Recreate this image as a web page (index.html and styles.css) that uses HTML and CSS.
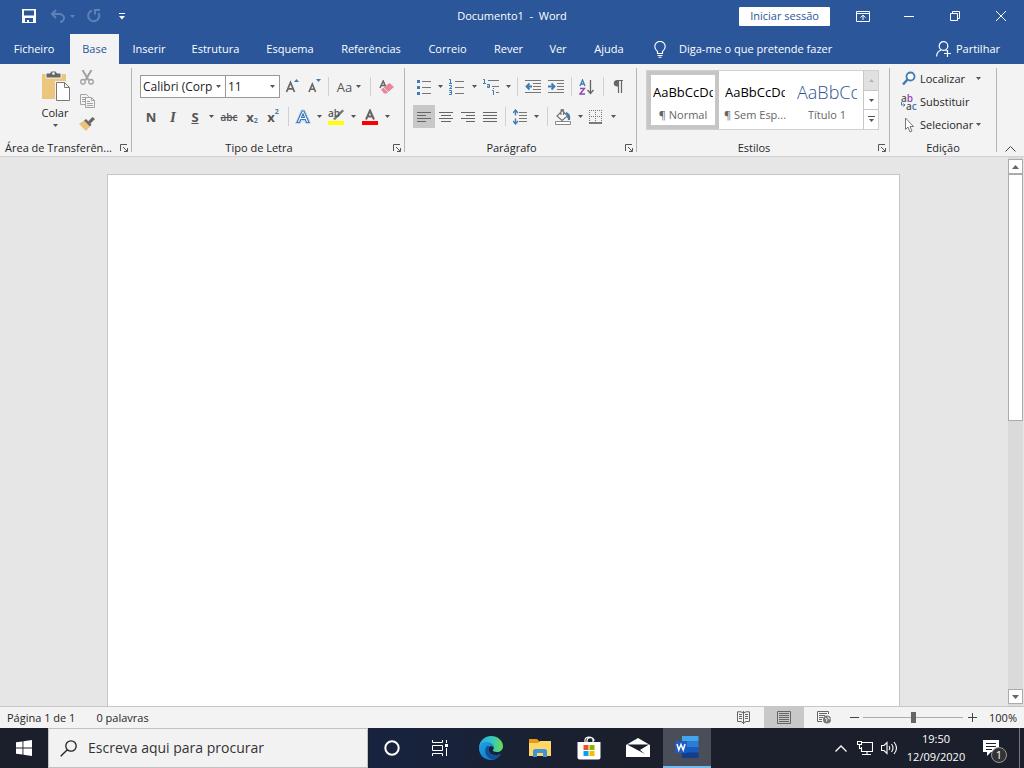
FILE: index.html
```html
<!DOCTYPE html>
<html lang="pt-PT">
<head>
<meta charset="utf-8">
<title>Documento1 - Word</title>
<link rel="stylesheet" href="styles.css">
</head>
<body>
<svg class="defs" aria-hidden="true">
  <symbol id="caret" viewBox="0 0 5 3"><path d="M0 0h5L2.500 3z" fill="#555"/></symbol>
  <symbol id="launch" viewBox="0 0 8 8"><path d="M.5 7V.5H7M3 3l4 4M7.500 4v3.500H4" fill="none" stroke="#555"/></symbol>
</svg>

<header class="titlebar">
  <div class="quick">
    <button class="q-save" aria-label="Guardar"><svg width="14" height="14" viewBox="0 0 14 14"><path fill="#fff" fill-rule="evenodd" d="M0 0h14v14H0zM2 1.500v5h10v-5zM3 9v4h2v-2h2v2h4V9z"/></svg></button>
    <button class="q-undo" aria-label="Anular"><svg width="16" height="14" viewBox="0 0 16 14"><path d="M6 1L2 5l4 4M2 5h7c3 0 5 2 5 4s-2 4-4 4" fill="none" stroke="#6181b6" stroke-width="2"/></svg><svg class="caret-dim" width="5" height="3" viewBox="0 0 5 3"><path d="M0 0h5L2.500 3z" fill="#6181b6"/></svg></button>
    <button class="q-redo" aria-label="Repetir"><svg width="14" height="14" viewBox="0 0 14 14"><path d="M5 1.500A5.500 5.500 0 1 0 11.500 4M8 5.500V1h5" fill="none" stroke="#6181b6" stroke-width="2"/></svg></button>
    <button class="q-more" aria-label="Personalizar"><svg width="6" height="7" viewBox="0 0 6 7"><path d="M0 0h6v1H0zM0 3h6L3 6.500z" fill="#fff"/></svg></button>
  </div>
  <h1 class="title">Documento1&nbsp; -&nbsp; Word</h1>
  <div class="window">
    <button class="signin">Iniciar sessão</button>
    <button class="win" aria-label="Opções do friso"><svg width="14" height="11" viewBox="0 0 14 11"><path d="M.5 .5h13v10H.5zM.5 2.500h13M7 9V4.500M4.500 6.500L7 4.200l2.500 2.300" fill="none" stroke="#fff"/></svg></button>
    <button class="win" aria-label="Minimizar"><svg width="10" height="10" viewBox="0 0 10 10"><path d="M0 5.500h10" stroke="#fff"/></svg></button>
    <button class="win" aria-label="Restaurar"><svg width="10" height="10" viewBox="0 0 10 10"><path d="M.5 2.500h7v7h-7zM2.500 2V.5h7v7H8" fill="none" stroke="#fff"/></svg></button>
    <button class="win" aria-label="Fechar"><svg width="10" height="10" viewBox="0 0 10 10"><path d="M0 0l10 10M10 0L0 10" stroke="#fff"/></svg></button>
  </div>
</header>

<nav class="tabs">
  <button class="file">Ficheiro</button>
  <button class="active">Base</button>
  <button>Inserir</button>
  <button>Estrutura</button>
  <button>Esquema</button>
  <button>Referências</button>
  <button>Correio</button>
  <button>Rever</button>
  <button>Ver</button>
  <button>Ajuda</button>
  <button class="tell"><svg width="12" height="17" viewBox="0 0 12 17"><path d="M3.500 12.500v-2C2 9 .8 8 .8 5.600a5.200 5.200 0 0 1 10.400 0C11.200 8 10 9 8.500 10.500v2zM3.500 14.500h5M4.500 16.300h3" fill="none" stroke="#fff" stroke-width="1.100"/></svg>Diga-me o que pretende fazer</button>
  <button class="share"><svg width="16" height="16" viewBox="0 0 16 16"><circle cx="7.500" cy="5" r="4.300" fill="none" stroke="#fff" stroke-width="1.200"/><path d="M.6 15.500c0-3 2-5.500 4.500-6.500M9.500 9.200l1 .8M11.500 9v7M8 12.500h7" fill="none" stroke="#fff" stroke-width="1.200"/></svg>Partilhar</button>
</nav>

<main class="ribbon">
  <section class="group clip">
    <div class="body">
      <button class="paste">
        <svg width="30" height="32" viewBox="0 0 30 32"><path d="M1 4h24v25H1z" fill="#ecc67c"/><path d="M5 3h4l1-2h5l1 2h4v5H5z" fill="#666" stroke="#f3f3f3"/><circle cx="12.500" cy="3.500" r="1.300" fill="#fff"/><path d="M15.500 12.500h8l5 5v13h-13z" fill="#fff" stroke="#f3f3f3" stroke-width="3"/><path d="M15.500 12.500h8l5 5v13h-13zM23.500 12.500v5h5" fill="#fff" stroke="#777"/></svg>
        <span>Colar</span>
        <svg width="5" height="3"><use href="#caret"/></svg>
      </button>
      <div class="clip-tools">
        <button aria-label="Cortar"><svg width="14" height="15" viewBox="0 0 14 15"><path d="M2.500 0l6 10M11.500 0l-6 10" stroke="#a0a0a0" stroke-width="2"/><circle cx="3" cy="11.800" r="2.300" fill="none" stroke="#a0a0a0" stroke-width="1.300"/><circle cx="11" cy="11.800" r="2.300" fill="none" stroke="#a0a0a0" stroke-width="1.300"/></svg></button>
        <button aria-label="Copiar"><svg width="15" height="14" viewBox="0 0 15 14"><path d="M.5 .5h6l2 2v8h-8zM2 3.500h4M2 5.500h4M2 7.500h4" fill="#f3f3f3" stroke="#a3a3a3"/><path d="M5.500 3.500h6l3 3v7h-9zM11.500 3.500v3h3M7 7.500h3M7 9.500h6M7 11.500h6" fill="#f3f3f3" stroke="#a3a3a3"/></svg></button>
        <button aria-label="Pincel de formatação"><svg width="16" height="14" viewBox="0 0 16 14"><path d="M0 7l5-3.500 6 6L7 14z" fill="#ecc27a"/><path d="M5 3.500l2-1.500 5.500 5.500L11 9.500z" fill="#666"/><path d="M9 4.500L13.500 0l2.500 2-4.500 4.500z" fill="#666"/></svg></button>
      </div>
    </div>
    <div class="foot"><h2>Área de Transferên...</h2><button aria-label="Abrir"><svg width="8" height="8"><use href="#launch"/></svg></button></div>
  </section>
  <i class="divider"></i>

  <section class="group font">
    <div class="body rows">
      <div class="row">
        <label class="combo family"><select aria-label="Tipo de letra"><option>Calibri (Corp</option></select><svg width="5" height="3"><use href="#caret"/></svg></label>
        <label class="combo size"><select aria-label="Tamanho"><option>11</option></select><svg width="5" height="3"><use href="#caret"/></svg></label>
        <button class="b24" aria-label="Aumentar"><svg width="14" height="15" viewBox="0 0 14 15"><path d="M1.500 13L5.500 3.500 9.500 13M2.800 9.800h5.400" fill="none" stroke="#666" stroke-width="1.700"/><path d="M9 3l2.500-3L14 3z" fill="#3f7cb5"/></svg></button>
        <button class="b20" aria-label="Diminuir"><svg width="13" height="15" viewBox="0 0 13 15"><path d="M1 13l3.300-8 3.300 8M2 10.300h4.500" fill="none" stroke="#666" stroke-width="1.600"/><path d="M8 0h5l-2.500 3z" fill="#3f7cb5"/></svg></button>
        <i class="sep"></i>
        <button class="b34 case">Aa<svg width="5" height="3"><use href="#caret"/></svg></button>
        <i class="sep"></i>
        <button class="b24" aria-label="Limpar"><svg width="15" height="14" viewBox="0 0 15 14"><path d="M1 8l3.200-7 2.600 6M2 5.500h4" fill="none" stroke="#666" stroke-width="1.500"/><path d="M2 9.500l8.500-6.500L15 7l-7.500 6.500H5z" fill="#e8869a"/><path d="M4.500 7.500l4.500 4.500" stroke="#f3f3f3" stroke-width=".8"/></svg></button>
      </div>
      <div class="row">
        <button class="b22 glyph">N</button>
        <button class="b22 glyph ital">I</button>
        <button class="b22 glyph under">S</button>
        <button class="b10" aria-label="Mais"><svg width="5" height="3"><use href="#caret"/></svg></button>
        <button class="b26 strike">abc</button>
        <button class="b20 glyph">x<sub>2</sub></button>
        <button class="b22 glyph">x<sup>2</sup></button>
        <i class="sep"></i>
        <button class="b22" aria-label="Efeitos"><svg width="16" height="16" viewBox="0 0 16 16"><path d="M2 13.500L7 2h2l5 11.500h-2.500L10.300 11H5.700l-1.200 2.500z" fill="none" stroke="#c5daee" stroke-width="3"/><path d="M2 13.500L7 2h2l5 11.500h-2.500L10.300 10.500H5.700l-1.200 3zM6.500 8.500h3L8 4.800z" fill="#fff" stroke="#3f7cb5" stroke-width="1.200"/></svg></button>
        <button class="b10" aria-label="Mais"><svg width="5" height="3"><use href="#caret"/></svg></button>
        <button class="b24 marker" aria-label="Realce"><span>ab</span><svg width="16" height="16" viewBox="0 0 16 16"><path d="M5 10l2 1 9-9-1.500-1.500-3.500 3z" fill="#777"/><path d="M0 12h16v4H0z" fill="#ff0"/></svg></button>
        <button class="b10" aria-label="Mais"><svg width="5" height="3"><use href="#caret"/></svg></button>
        <button class="b24" aria-label="Cor"><svg width="16" height="16" viewBox="0 0 16 16"><path d="M4 10.500L8 1.500l4 9M5.500 7.500h5" fill="none" stroke="#666" stroke-width="2"/><path d="M0 12h16v4H0z" fill="#f00"/></svg></button>
        <button class="b10" aria-label="Mais"><svg width="5" height="3"><use href="#caret"/></svg></button>
      </div>
    </div>
    <div class="foot"><h2>Tipo de Letra</h2><button aria-label="Abrir"><svg width="8" height="8"><use href="#launch"/></svg></button></div>
  </section>
  <i class="divider"></i>

  <section class="group para">
    <div class="body rows">
      <div class="row">
        <button class="b22" aria-label="Marcas"><svg width="14" height="16" viewBox="0 0 14 16"><path d="M5 2.500h9M5 8.500h9M5 14.500h9" stroke="#777"/><path d="M0 1h3v3H0zM0 7h3v3H0zM0 13h3v3H0z" fill="#3f7cb5"/></svg></button>
        <button class="b10" aria-label="Mais"><svg width="5" height="3"><use href="#caret"/></svg></button>
        <button class="b24" aria-label="Numeração"><svg width="16" height="16" viewBox="0 0 16 16"><path d="M6 2.500h9M6 8.500h9M6 14.500h9" stroke="#777"/><path d="M0 .5h1.500V4M0 4.500h3M0 6.500h2.500v1.500L.5 9.500H3M0 11.500h2.500v4H0M.5 13.500h2" fill="none" stroke="#3f7cb5"/></svg></button>
        <button class="b10" aria-label="Mais"><svg width="5" height="3"><use href="#caret"/></svg></button>
        <button class="b24" aria-label="Vários níveis"><svg width="16" height="16" viewBox="0 0 16 16"><path d="M5 1.500h11M9 7.500h7M13 13.500h3" stroke="#777"/><path d="M0 .5h1.500V4M0 4.500h3M4 5.500h2.500v3H4.500v-1.500h2M10.500 9v1M9 11.500h1.500V16" fill="none" stroke="#3f7cb5"/></svg></button>
        <button class="b10" aria-label="Mais"><svg width="5" height="3"><use href="#caret"/></svg></button>
        <i class="sep"></i>
        <button class="b24" aria-label="Diminuir avanço"><svg width="16" height="13" viewBox="0 0 16 13"><path d="M0 .5h16M8 3.500h8M8 6.500h8M8 9.500h8M0 12.500h16" stroke="#777"/><path d="M7 6.500H1.500M4.500 3.500l-3 3 3 3" stroke="#3f7cb5" stroke-width="1.800" fill="none"/></svg></button>
        <button class="b22" aria-label="Aumentar avanço"><svg width="16" height="13" viewBox="0 0 16 13"><path d="M0 .5h16M9 3.500h7M9 6.500h7M9 9.500h7M0 12.500h16" stroke="#777"/><path d="M0 6.500h6M3.500 3.500l3 3-3 3" stroke="#3f7cb5" stroke-width="1.800" fill="none"/></svg></button>
        <i class="sep"></i>
        <button class="b24" aria-label="Ordenar"><svg width="16" height="16" viewBox="0 0 16 16"><path d="M1 7l2.500-6L6 7M2 5h3" stroke="#3f7cb5" stroke-width="1.300" fill="none"/><path d="M1 9.500h4.500L1 15h5" stroke="#9147b5" stroke-width="1.400" fill="none"/><path d="M11.500 1v13M8.500 11l3 3.500 3-3.500" fill="none" stroke="#666" stroke-width="1.300"/></svg></button>
        <i class="sep"></i>
        <button class="b22" aria-label="Mostrar marcas"><svg width="10" height="13" viewBox="0 0 10 13"><path d="M10 .5H4M5.500 0v13M8.500 0v13" stroke="#666" stroke-width="1.200"/><path d="M5 0H3.500a3.300 3.300 0 0 0 0 6.500H5z" fill="#666"/></svg></button>
      </div>
      <div class="row">
        <button class="b22 on" aria-label="Esquerda"><svg width="14" height="10" viewBox="0 0 14 10"><path d="M0 .5h14M0 3.500h9M0 6.500h14M0 9.500h9" stroke="#666"/></svg></button>
        <button class="b22" aria-label="Centro"><svg width="14" height="10" viewBox="0 0 14 10"><path d="M0 .5h14M2 3.500h10M0 6.500h14M2 9.500h10" stroke="#666"/></svg></button>
        <button class="b22" aria-label="Direita"><svg width="14" height="10" viewBox="0 0 14 10"><path d="M0 .5h14M5 3.500h9M0 6.500h14M5 9.500h9" stroke="#666"/></svg></button>
        <button class="b22" aria-label="Justificar"><svg width="14" height="10" viewBox="0 0 14 10"><path d="M0 .5h14M0 3.500h14M0 6.500h14M0 9.500h14" stroke="#666"/></svg></button>
        <i class="sep"></i>
        <button class="b22" aria-label="Espaçamento"><svg width="14" height="16" viewBox="0 0 14 16"><path d="M6 3.500h8M6 6.500h8M6 9.500h8M6 12.500h8" stroke="#777"/><path d="M2.500 1v5.500M2.500 9.500V15M0 4l2.500-3L5 4M0 12l2.500 3L5 12" fill="none" stroke="#3f7cb5" stroke-width="1.400"/></svg></button>
        <button class="b10" aria-label="Mais"><svg width="5" height="3"><use href="#caret"/></svg></button>
        <i class="sep wide"></i>
        <button class="b24" aria-label="Sombreado"><svg width="16" height="16" viewBox="0 0 16 16"><path d="M11 3c3 1 5 3 4 8h-2c0-2-1-3-2-4z" fill="#3f7cb5"/><path d="M2 7l5.500-5.500 5 5.500L7 11.500zM6 6V1.500c0-1.500 2.500-1.500 2.500 0V6" fill="#f8f8f8" stroke="#777" stroke-width="1.200"/><path d="M.5 12.500h15v3H.5z" fill="#fff" stroke="#888"/></svg></button>
        <button class="b10" aria-label="Mais"><svg width="5" height="3"><use href="#caret"/></svg></button>
        <button class="b22" aria-label="Limites"><svg width="14" height="14" viewBox="0 0 14 14"><path d="M0 .5h13M0 6.500h13M.5 0v13M6.500 0v13M12.500 0v13" stroke="#777" stroke-dasharray="1 1"/><path d="M0 13h13" stroke="#555" stroke-width="1.500"/></svg></button>
        <button class="b12" aria-label="Mais"><svg width="5" height="3"><use href="#caret"/></svg></button>
      </div>
    </div>
    <div class="foot"><h2>Parágrafo</h2><button aria-label="Abrir"><svg width="8" height="8"><use href="#launch"/></svg></button></div>
  </section>
  <i class="divider"></i>

  <section class="group styles">
    <div class="body">
      <div class="gallery">
        <button class="style chosen"><span class="sample">AaBbCcDd</span><span class="name">¶ Normal</span></button>
        <button class="style"><span class="sample">AaBbCcDd</span><span class="name">¶ Sem Esp...</span></button>
        <button class="style"><span class="sample big">AaBbCc</span><span class="name">Título 1</span></button>
        <div class="scrolls">
          <button class="off" aria-label="Acima"><svg width="5" height="3" viewBox="0 0 5 3"><path d="M0 3h5L2.500 0z" fill="#b5b5b5"/></svg></button>
          <button aria-label="Abaixo"><svg width="5" height="3"><use href="#caret"/></svg></button>
          <button aria-label="Mais"><svg width="7" height="7" viewBox="0 0 7 7"><path d="M0 .5h7" stroke="#555"/><path d="M1 3h5L3.500 6z" fill="#555"/></svg></button>
        </div>
      </div>
    </div>
    <div class="foot"><h2>Estilos</h2><button aria-label="Abrir"><svg width="8" height="8"><use href="#launch"/></svg></button></div>
  </section>
  <i class="divider"></i>

  <section class="group edit">
    <div class="body">
      <button><svg width="16" height="16" viewBox="0 0 16 16"><circle cx="9.500" cy="5.500" r="4" fill="#fff" stroke="#3f7cb5" stroke-width="1.800"/><path d="M6.500 8.500l-4.500 5" stroke="#3f7cb5" stroke-width="2.500"/></svg>Localizar<svg class="drop" width="5" height="3"><use href="#caret"/></svg></button>
      <button><span class="repl"><b>a<em>b</em></b><b><svg width="5" height="5" viewBox="0 0 5 5"><path d="M.5 0v3H4M2.500 1.500L4 3 2.500 4.500" fill="none" stroke="#3f7cb5"/></svg>a<u>c</u></b></span>Substituir</button>
      <button><svg width="16" height="16" viewBox="0 0 16 16"><path d="M4.500 1v11.500L7 10l2 5 2-1-2-4.500h3.500z" fill="#fff" stroke="#777"/></svg>Selecionar<svg width="5" height="3"><use href="#caret"/></svg></button>
    </div>
    <div class="foot"><h2>Edição</h2></div>
  </section>
  <i class="divider"></i>
  <button class="collapse" aria-label="Fechar friso"><svg width="11" height="6" viewBox="0 0 11 6"><path d="M.5 5.500l5-5 5 5" fill="none" stroke="#444"/></svg></button>
</main>

<div class="workspace">
  <div class="canvas"><article class="page" contenteditable="true" aria-label="Documento"></article></div>
  <div class="vscroll">
    <button aria-label="Subir"><svg width="7" height="4" viewBox="0 0 7 4"><path d="M0 4h7L3.500 0z" fill="#666"/></svg></button>
    <div class="rail"><div class="thumb"></div></div>
    <button aria-label="Descer"><svg width="7" height="4" viewBox="0 0 7 4"><path d="M0 0h7L3.500 4z" fill="#666"/></svg></button>
  </div>
</div>

<footer class="status">
  <span>Página 1 de 1</span><span>0 palavras</span>
  <div class="views">
    <button aria-label="Leitura"><svg width="14" height="13" viewBox="0 0 14 13"><path d="M6.500 2L4 .8H.5v9.700H4L6.500 12 9 10.500h3.500V.8H9zM6.500 0v13M2 3.500h3M2 5.500h3M2 7.500h3M8 3.500h3M8 5.500h3M8 7.500h3" fill="none" stroke="#666"/></svg></button>
    <button class="on" aria-label="Impressão"><svg width="14" height="13" viewBox="0 0 14 13"><path d="M.5 .5h13v12H.5zM2 2.500h10M2 4.500h10M2 6.500h10M2 8.500h10M2 10.500h10" fill="none" stroke="#666"/></svg></button>
    <button aria-label="Web"><svg width="14" height="13" viewBox="0 0 14 13"><path d="M11.500 3V.5H.5v10H5M2 2.500h8M2 4.500h6M2 6.500h4M2 8.500h3" fill="none" stroke="#666"/><circle cx="10" cy="8.500" r="4" fill="#777"/><path d="M8 7l2 1-.5 2.500M11 5.500l.5 2 2 .5" stroke="#f3f3f3" fill="none"/></svg></button>
  </div>
  <div class="zoombar">
    <button aria-label="Reduzir"><svg width="9" height="9" viewBox="0 0 9 9"><path d="M0 4.500h9" stroke="#444"/></svg></button>
    <input class="slider" type="range" min="0" max="100" value="50" aria-label="Zoom">
    <button aria-label="Ampliar"><svg width="9" height="9" viewBox="0 0 9 9"><path d="M0 4.500h9M4.500 0v9" stroke="#444"/></svg></button>
  </div>
  <span>100%</span>
</footer>

<div class="taskbar">
  <button class="task" aria-label="Iniciar"><svg width="16" height="16" viewBox="0 0 16 16"><path d="M0 2.300l6.500-.9v6.200H0zM7.400 1.200L16 0v7.600H7.400zM0 8.400h6.500v6.200L0 13.700zM7.400 8.400H16V16l-8.600-1.200z" fill="#fff"/></svg></button>
  <label class="search"><svg width="18" height="17" viewBox="0 0 18 17"><circle cx="11" cy="6" r="5.200" fill="none" stroke="#222" stroke-width="1.300"/><path d="M7.300 9.700L.7 16.300" stroke="#222" stroke-width="1.300"/></svg><input type="text" placeholder="Escreva aqui para procurar" aria-label="Procurar"></label>
  <button class="task" aria-label="Cortana"><svg width="16" height="16" viewBox="0 0 16 16"><circle cx="8" cy="8" r="6.700" fill="none" stroke="#fff" stroke-width="2"/></svg></button>
  <button class="task" aria-label="Vista de tarefas"><svg width="16" height="16" viewBox="0 0 16 16"><path d="M.5 0v2.500h10V0M.5 5.500h10v5H.5zM.5 16v-2.500h10V16M14.500 0v3M14.500 8v8" fill="none" stroke="#fff"/><path d="M13 4h3v3h-3z" fill="#fff"/></svg></button>
  <div class="pinned">
    <button aria-label="Edge"><svg width="24" height="24" viewBox="0 0 24 24"><defs><linearGradient id="eg" x1="0" x2="1"><stop stop-color="#2ca8e0"/><stop offset=".55" stop-color="#35c7c4"/><stop offset="1" stop-color="#6ddc4a"/></linearGradient><linearGradient id="eb" x1="0" y1="0" x2="1" y2="1"><stop stop-color="#1fa5e3"/><stop offset="1" stop-color="#1068bd"/></linearGradient></defs><path d="M0 11C1 4 6 0 12 0c7 0 12 5 12 10 0 4-3 6-6 6-3 0-4.500-1-4-2 1.500-2 1-5-3-6C7 7 2 8 0 11z" fill="url(#eg)"/><path d="M0 12c0-4 4-6 7.500-6 4 0 7 2 7 5-3-2-5.500 0-5 3 .6 4 6 7 12 4C19 22 16 24 12 24 5 24 0 19 0 12z" fill="url(#eb)"/><path d="M8 10c-4 5-1 12 6 13.700C18 23 21 20.500 22 18c-6 2.500-11 1-12.500-3.500C9 12.500 9.500 11 11 10z" fill="#114f9c"/></svg></button>
    <button aria-label="Explorador"><svg width="22" height="18" viewBox="0 0 22 18"><path d="M0 0h8l2 2v3H0z" fill="#e79b12"/><path d="M0 4h9l2-2h11v15H0z" fill="#ffd767"/><path d="M4 18v-6c0-1 1-2 2-2h10c1 0 2 1 2 2v6h-4v-4H8v4z" fill="#3d94d8"/></svg></button>
    <button aria-label="Loja"><svg width="24" height="24" viewBox="0 0 24 24"><path d="M8 7V4c0-4 8-4 8 0v3M10 7V5c0-5 7-4 7 0" fill="none" stroke="#fff" stroke-width="1.200"/><path d="M.5 6h23v15.500q0 2-2 2h-19q-2 0-2-2z" fill="#fff"/><path d="M6.500 9h5v5h-5z" fill="#f25022"/><path d="M12.500 9h5v5h-5z" fill="#7fba00"/><path d="M6.500 15h5v5h-5z" fill="#00a4ef"/><path d="M12.500 15h5v5h-5z" fill="#ffb900"/></svg></button>
    <button aria-label="Correio"><svg width="24" height="20" viewBox="0 0 24 20"><path d="M0 7l12-7 12 7v12H0z" fill="#fff"/><path d="M1 6.500h22L14 12l5 4L1 6.500z" fill="#1b1f2b"/></svg></button>
  </div>
  <button class="task word" aria-label="Word"><svg width="24" height="22" viewBox="0 0 24 22"><path d="M7 0h16.500v5.500H7z" fill="#41a5ee"/><path d="M7 5.500h16.500V11H7z" fill="#2b7cd3"/><path d="M7 11h16.500v5.500H7z" fill="#185abd"/><path d="M7 16.500h16.500V22H7z" fill="#103f91"/><path d="M0 5h12v12H0z" fill="#1d5bbf"/><path d="M2 8l1.800 6L6 8.500 8.200 14 10 8" fill="none" stroke="#fff" stroke-width="1.500"/></svg></button>
  <div class="tray">
    <button aria-label="Ícones ocultos"><svg width="12" height="7" viewBox="0 0 12 7"><path d="M.5 6.500L6 1l5.500 5.500" fill="none" stroke="#fff" stroke-width="1.300"/></svg></button>
    <button aria-label="Rede"><svg width="16" height="14" viewBox="0 0 16 14"><path d="M5 1.500h10.500v9H4.500V6M10 10.500v3M5 13.500h9M.5 .5h4v3h-4zM2.500 3.500v4h2" fill="none" stroke="#fff" stroke-width="1.100"/></svg></button>
    <button aria-label="Som"><svg width="17" height="14" viewBox="0 0 17 14"><path d="M.5 4.500H3l3-3v11l-3-3H.5zM8 5q1.500 2 0 4M10.500 3q3 4 0 8M13 1q5 6 0 12" fill="none" stroke="#fff" stroke-width="1.100"/></svg></button>
    <button class="clock"><span>19:50</span><span>12/09/2020</span></button>
    <button class="notes" aria-label="Notificações"><svg width="17" height="16" viewBox="0 0 17 16"><path d="M0 0h16v12h-8l-4 4v-4H0z" fill="#fff"/><path d="M3 3.500h10M3 6.500h10M3 9.500h6" stroke="#1b1f2b"/></svg><span class="badge">1</span></button>
  </div>
</div>
</body>
</html>
```
FILE: styles.css
```css
* { box-sizing: border-box; }
body {
  margin: 0;
  height: 100vh;
  display: flex;
  flex-direction: column;
  overflow: hidden;
  background: #e6e6e6;
  color: #262626;
  font: 11px/16px "Open Sans", "Noto Sans", sans-serif;
}
button, select, input { font: inherit; color: inherit; }
button {
  display: flex;
  align-items: center;
  justify-content: center;
  padding: 0;
  border: 0;
  background: none;
  white-space: nowrap;
}
svg { display: block; flex: none; }
.defs { position: absolute; width: 0; height: 0; }
h1, h2 { margin: 0; font-size: 11px; font-weight: 400; }

.titlebar {
  display: grid;
  grid-template-columns: 1fr auto 1fr;
  align-items: center;
  height: 34px;
  padding-bottom: 2px;
  background: #2b579a;
  color: #fff;
}
.quick { display: flex; padding-left: 14px; }
.quick button { height: 28px; }
.q-save { width: 29px; }
.q-undo { width: 38px; gap: 4px; }
.q-redo { width: 26px; }
.q-more { width: 30px; }
.window { display: flex; align-items: center; justify-content: flex-end; }
.signin {
  width: 91px;
  height: 19px;
  margin-right: 10px;
  border-radius: 1px;
  background: #fff;
  color: #2b579a;
}
.win { width: 46px; height: 30px; }

.tabs {
  display: grid;
  grid-template-columns: 70px 49px 60px 73px 76px 86px 67px 55px 44px 58px auto 1fr;
  height: 30px;
  background: #2b579a;
  color: #fff;
}
.tabs .file { padding-right: 2px; }
.tabs .active { background: #f3f3f3; color: #2b579a; }
.tabs .tell { gap: 13px; padding-left: 16px; }
.tabs .share { gap: 4px; justify-content: flex-end; padding-right: 24px; }

.ribbon {
  display: flex;
  height: 93px;
  background: #f3f3f3;
  border-bottom: 1px solid #d2d2d2;
}
.divider { width: 1px; margin: 4px 0; background: #b4b4b4; }
.group { display: flex; flex-direction: column; }
.group .body { flex: 1; display: flex; }
.clip { width: 131px; }
.font { width: 272px; }
.para { width: 231px; }
.styles { width: 252px; }
.edit { width: 106px; }
.foot { display: flex; height: 16px; }
.foot h2 { flex: 1; text-align: center; white-space: nowrap; }
.foot button { width: 18px; padding-left: 4px; }
.clip .foot { padding-left: 5px; }
.clip .foot h2 { text-align: left; }
.clip .foot button { width: 15px; padding: 0; }

.paste {
  flex-direction: column;
  justify-content: flex-start;
  gap: 3px;
  width: 30px;
  margin: 6px 8px 0 40px;
}
.paste svg:first-child { margin-left: 2px; }
.clip-tools { display: flex; flex-direction: column; padding-top: 2px; }
.clip-tools button { width: 18px; height: 23px; }

.rows { flex-direction: column; gap: 7px; padding: 11px 0 0 8px; }
.row { display: flex; height: 23px; }
.combo {
  position: relative;
  display: flex;
  height: 23px;
  border: 1px solid #999;
  background: #fff;
}
.combo select {
  width: 100%;
  padding: 0 2px;
  border: 0;
  appearance: none;
  background: none;
  color: #222;
  font-size: 12px;
}
.combo svg { position: absolute; right: 4px; top: 9px; pointer-events: none; }
.family { width: 86px; margin-right: -1px; }
.size { width: 55px; }
.b10 { width: 10px; }
.b12 { width: 12px; }
.b20 { width: 20px; }
.b22 { width: 22px; }
.b24 { width: 24px; }
.b26 { width: 26px; }
.b34 { width: 34px; }
.on { background: #c8c8c8; }
.sep { width: 1px; margin: 2px 3px 2px 4px; background: #d0d0d0; }
.sep.wide { margin-left: 6px; }
.case { gap: 4px; color: #555; font-size: 13px; }
.glyph { color: #555; font-size: 13px; font-weight: 700; }
.glyph sub, .glyph sup { color: #3f7cb5; font-size: 7px; line-height: 8px; }
.glyph sub { align-self: flex-end; padding-bottom: 3px; }
.glyph sup { align-self: flex-start; padding-top: 3px; }
.ital { font-family: "Liberation Serif", serif; font-size: 15px; font-style: italic; }
.under { text-decoration: underline; }
.strike { color: #555; font-weight: 600; font-size: 10px; text-decoration: line-through; }
.marker { position: relative; }
.marker span {
  position: absolute;
  left: 4px;
  top: 0;
  color: #555;
  font-size: 10px;
  font-weight: 600;
}

.styles .body { padding: 6px 0 0 9px; }
.gallery {
  display: flex;
  width: 233px;
  height: 60px;
  border: 1px solid #d0d0d0;
  background: #fff;
}
.style {
  flex-direction: column;
  justify-content: flex-start;
  flex: 1;
  min-width: 0;
  gap: 4px;
  padding-top: 7px;
  border: 4px solid transparent;
}
.style.chosen { border-color: #c6c6c6; }
.style .sample {
  width: 60px;
  overflow: hidden;
  color: #000;
  font-size: 13px;
  line-height: 20px;
  text-align: left;
}
.style .big { color: #2f5496; font-size: 18px; font-weight: 300; }
.style .name { line-height: 20px; color: #666; }
.scrolls {
  display: flex;
  flex-direction: column;
  width: 15px;
  border-left: 1px solid #c6c6c6;
}
.scrolls button { flex: 1; }
.scrolls button + button { border-top: 1px solid #c6c6c6; }
.scrolls .off { background: #e1e1e1; }

.edit .body { flex-direction: column; padding: 3px 0 0 11px; }
.edit .body button { justify-content: flex-start; gap: 3px; height: 23px; }
.edit .drop { margin-left: 8px; }
.repl { width: 16px; font-size: 10px; line-height: 8px; }
.repl b { display: flex; font-weight: 600; color: #555; }
.repl em { font-style: normal; color: #9147b5; }
.repl u { text-decoration: none; color: #3f7cb5; }
.collapse { flex: 1; align-items: flex-end; padding-bottom: 4px; }

.workspace { flex: 1; display: flex; min-height: 0; }
.canvas { flex: 1; display: flex; justify-content: center; padding: 17px 1px 0 0; }
.page {
  width: 793px;
  border: 1px solid #c6c6c6;
  border-bottom: 0;
  background: #fff;
}
.vscroll {
  display: flex;
  flex-direction: column;
  width: 15px;
  margin-right: 1px;
  padding: 2px 0;
  background: #dadada;
}
.vscroll button { height: 15px; border: 1px solid #ababab; background: #fff; }
.rail { flex: 1; }
.thumb { height: 48%; border: 1px solid #ababab; background: #fff; }

.status {
  display: flex;
  align-items: center;
  height: 22px;
  padding: 0 7px;
  border-top: 1px solid #c6c6c6;
  background: #f3f3f3;
}
.status span:first-child { margin-right: 21px; }
.views { display: flex; align-self: stretch; margin-left: auto; }
.views button { width: 40px; }
.zoombar { display: flex; align-items: center; gap: 4px; margin: 0 12px 0 5px; }
.zoombar button { width: 10px; height: 16px; }
.slider {
  width: 100px;
  height: 12px;
  margin: 0;
  appearance: none;
  background: linear-gradient(#ababab, #ababab) center / 100% 1px no-repeat;
}
.slider::-webkit-slider-thumb {
  appearance: none;
  width: 5px;
  height: 11px;
  background: #666;
}

.taskbar {
  display: flex;
  height: 40px;
  background: linear-gradient(90deg, #1b1f2b 0 36%, #17233f 36%, #1b1f2b 62%);
  color: #fff;
}
.task { width: 48px; }
.search {
  display: flex;
  align-items: center;
  gap: 10px;
  width: 320px;
  padding-left: 11px;
  border: 1px solid #c3c3c3;
  background: #f2f2f2;
}
.search input {
  flex: 1;
  min-width: 0;
  padding: 0;
  border: 0;
  outline: 0;
  background: none;
  font-size: 14px;
}
.search input::placeholder { color: #333; opacity: 1; }
.pinned { display: flex; padding: 0 1px 0 2px; }
.pinned button { width: 49px; }
.word { background: #4a4e59; border-bottom: 2px solid #76b9ed; }
.tray { display: flex; margin-left: auto; padding-right: 4px; }
.tray button { width: 24px; }
.tray .clock { flex-direction: column; width: 70px; line-height: 18px; }
.tray .notes {
  position: relative;
  width: 49px;
  padding-right: 8px;
  border-right: 1px solid #777;
}
.badge {
  position: absolute;
  left: 20px;
  top: 19px;
  width: 16px;
  height: 16px;
  border: 1px solid #999;
  border-radius: 50%;
  background: #333;
  line-height: 14px;
  text-align: center;
}
```
